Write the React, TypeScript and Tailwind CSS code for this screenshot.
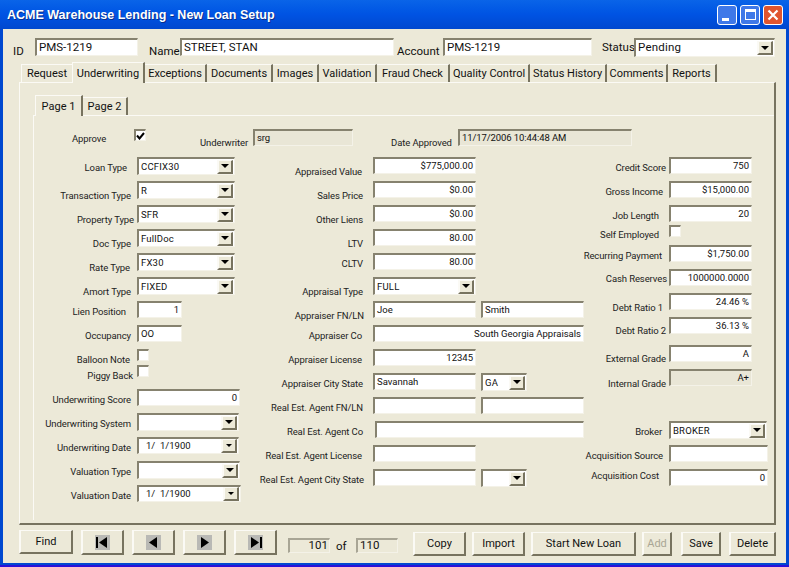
import type { ReactNode } from 'react'

// Sunken / raised edges used all over the form
const sunken = 'border-t-2 border-l-2 border-t-[#86826f] border-l-[#86826f] border-r border-b border-r-[#f4f2e8] border-b-[#f4f2e8]'
const raised = 'border-t border-l-2 border-t-[#fbfaf5] border-l-[#fbfaf5] border-r-2 border-b-2 border-r-[#77735f] border-b-[#77735f]'

function Arrow({ small }: { small?: boolean }) {
  return (
    <svg width={small ? 6 : 8} height={small ? 3 : 4} viewBox="0 0 8 4">
      <path d="M0 0h8L4 4z" fill="#000" />
    </svg>
  )
}

function Text({ value, right, disabled, className }: { value?: string; right?: boolean; disabled?: boolean; className: string }) {
  return (
    <div
      className={`${sunken} ${className} ${disabled ? 'bg-[#e9e6d6]' : 'bg-white'} ${right ? 'justify-end pr-[2px]' : 'pl-[2px]'} flex shrink-0 items-center overflow-hidden whitespace-pre text-[9.5px] leading-none text-[#111]`}
    >
      {value}
    </div>
  )
}

function Combo({ value, small, className }: { value?: string; small?: boolean; className: string }) {
  return (
    <div className={`${sunken} ${className} flex shrink-0 items-center justify-between bg-white text-[9.5px] leading-none text-[#111]`}>
      <span className={small ? 'whitespace-pre pl-[7px]' : 'pl-[2px] tracking-[0.2px]'}>{value}</span>
      <span className={`${raised} mr-px flex h-[14px] w-[16px] items-center justify-center bg-[#ece9d8]`}>
        <Arrow small={small} />
      </span>
    </div>
  )
}

function Check({ checked }: { checked?: boolean }) {
  return (
    <div className={`${sunken} flex h-[12px] w-[12px] shrink-0 items-center justify-center bg-white`}>
      {checked && (
        <svg width="9" height="8" viewBox="0 0 9 8">
          <path d="M1 3.5l2.5 3L8 1" fill="none" stroke="#000" strokeWidth="2" />
        </svg>
      )}
    </div>
  )
}

// one form line: label pushed against the control, row height sets the pitch
function Row({ label, labelClass, h = 'h-[24px]', children }: { label: string; labelClass: string; h?: string; children: ReactNode }) {
  return (
    <div className={`flex ${h} items-start`}>
      <div className={`${labelClass} flex shrink-0 justify-end whitespace-nowrap pt-px text-[9.5px] leading-none tracking-[-0.1px] text-[#222]`}>{label}</div>
      {children}
    </div>
  )
}

function PushButton({ label, className, disabled }: { label: string; className: string; disabled?: boolean }) {
  return (
    <button className={`${raised} ${className} h-[24px] bg-[#ece9d8] text-[11px] leading-none ${disabled ? 'text-[#a9a695]' : 'text-[#111]'}`}>
      {label}
    </button>
  )
}

function NavButton({ d, bar }: { d: string; bar?: 'left' | 'right' }) {
  return (
    <button className={`${raised} flex h-[25px] w-[43px] items-center justify-center bg-[#ece9d8]`}>
      <svg width="15" height="15" viewBox="0 0 15 15">
        <rect width="15" height="15" fill="#b9b9b5" />
        <path d={d} fill="#000" />
        {bar === 'left' && <rect x="1" y="2" width="2" height="11" fill="#000" />}
        {bar === 'right' && <rect x="12" y="2" width="2" height="11" fill="#000" />}
      </svg>
    </button>
  )
}

const outerTabs: [string, string][] = [
  ['Exceptions', 'w-[62px]'],
  ['Documents', 'w-[66px]'],
  ['Images', 'w-[46px]'],
  ['Validation', 'w-[58px]'],
  ['Fraud Check', 'w-[73px]'],
  ['Quality Control', 'w-[80px]'],
  ['Status History', 'w-[77px]'],
  ['Comments', 'w-[61px]'],
  ['Reports', 'w-[49px]'],
]

export default function App() {
  return (
    <div className="flex h-[567px] w-[789px] flex-col overflow-hidden border-b-2 border-b-[#2a10d8] bg-[#0048d0] font-['Roboto',sans-serif]">
      {/* Title bar */}
      <div className="flex h-[29px] shrink-0 items-center justify-between bg-gradient-to-b from-[#0a64e8] via-[#0053e3] to-[#0048cf] pl-[7px] pr-[6px]">
        <span className="pt-[2px] font-['Liberation_Sans',sans-serif] text-[12.5px] font-bold text-white [text-shadow:1px_1px_#0a2f8c]">ACME Warehouse Lending - New Loan Setup</span>
        <div className="flex gap-[3px]">
          <div className="flex h-[20px] w-[20px] items-end rounded-[3px] border border-white bg-[#3f78e8] pb-[3px] pl-[4px]">
            <div className="h-[3px] w-[7px] bg-white" />
          </div>
          <div className="flex h-[20px] w-[20px] items-center justify-center rounded-[3px] border border-white bg-[#3f78e8]">
            <div className="h-[11px] w-[11px] border border-t-[3px] border-white" />
          </div>
          <div className="flex h-[20px] w-[20px] items-center justify-center rounded-[3px] border border-white bg-[#e0552f]">
            <svg width="12" height="12" viewBox="0 0 12 12">
              <path d="M1.5 1.5l9 9M10.5 1.5l-9 9" stroke="#fff" strokeWidth="2.2" />
            </svg>
          </div>
        </div>
      </div>

      {/* Window body */}
      <div className="mx-[3px] mb-[2px] flex min-h-0 flex-1 flex-col bg-[#ece9d8] pl-[16px] pr-[10px] pt-[9px]">
        {/* Header fields */}
        <div className="flex h-[24px] shrink-0 text-[11.5px] leading-none text-[#111]">
          <span className="-ml-[6px] mt-[8px] w-[22px]">ID</span>
          <Text value="PMS-1219" className="h-[18px] w-[103px] !text-[11.5px]" />
          <span className="ml-[11px] mt-[8px] w-[31px]">Name</span>
          <Text value="STREET, STAN" className="h-[18px] w-[214px] !text-[11.5px]" />
          <span className="ml-[3px] mt-[8px] w-[46px]">Account</span>
          <Text value="PMS-1219" className="h-[18px] w-[149px] !text-[11.5px]" />
          <span className="ml-[10px] mt-[4px] w-[32px]">Status</span>
          <Combo value="Pending" className="h-[19px] w-[141px] !text-[11.5px]" />
        </div>

        {/* Tabs */}
        <div className="flex h-[20px] shrink-0 items-end pl-[2px] text-[11px] leading-none text-[#111]">
          <div className="flex h-[18px] w-[51px] items-center justify-center border-l border-t border-[#fbfaf5]">Request</div>
          <div className="z-10 -mb-px flex h-[21px] w-[73px] items-center justify-center border-l border-t border-r-2 border-l-[#fbfaf5] border-t-[#fbfaf5] border-r-[#77735f] bg-[#ece9d8]">Underwriting</div>
          {outerTabs.map(([name, w]) => (
            <div key={name} className={`${w} flex h-[18px] items-center justify-center border-r-2 border-t border-r-[#77735f] border-t-[#fbfaf5]`}>
              {name}
            </div>
          ))}
        </div>

        {/* Tab page */}
        <div className="flex h-[443px] shrink-0 flex-col border-b-2 border-l border-r-2 border-t border-[#fbfaf5] border-b-[#77735f] border-r-[#77735f] pb-[3px] pl-[13px] pt-[12px]">
          <div className="flex h-[20px] shrink-0 items-end pl-[2px] text-[11px] leading-none text-[#111]">
            <div className="z-10 -mb-px flex h-[21px] w-[48px] items-center justify-center border-l border-t border-r-2 border-l-[#fbfaf5] border-t-[#fbfaf5] border-r-[#77735f] bg-[#ece9d8]">Page 1</div>
            <div className="flex h-[18px] w-[45px] items-center justify-center border-r-2 border-t border-r-[#77735f] border-t-[#fbfaf5]">Page 2</div>
          </div>
          <div className="min-h-0 flex-1 border-l border-t border-[#fbfaf5] pt-[13px]">
            {/* Approve line */}
            <div className="flex h-[28px] items-start whitespace-nowrap text-[9.5px] leading-none tracking-[-0.1px] text-[#222]">
              <span className="ml-[38px] mt-[5px] w-[62px]">Approve</span>
              <Check checked />
              <span className="ml-[54px] mt-[9px] w-[53px]">Underwriter</span>
              <Text value="srg" disabled className="h-[17px] w-[100px]" />
              <span className="ml-[38px] mt-[9px] w-[67px]">Date Approved</span>
              <Text value="11/17/2006 10:44:48 AM" disabled className="h-[17px] w-[174px]" />
            </div>

            <div className="flex">
              {/* Left column */}
              <div className="w-[208px] shrink-0">
                <Row label="Loan Type" labelClass="w-[103px] pr-[10px] mt-[5px]"><Combo value="CCFIX30" className="h-[18px] w-[98px]" /></Row>
                <Row label="Transaction Type" labelClass="w-[103px] pr-[6px] mt-[9px]"><Combo value="R" className="h-[18px] w-[98px]" /></Row>
                <Row label="Property Type" labelClass="w-[103px] pr-[3px] mt-[9px]"><Combo value="SFR" className="h-[18px] w-[98px]" /></Row>
                <Row label="Doc Type" labelClass="w-[103px] pr-[6px] mt-[9px]"><Combo value="FullDoc" className="h-[18px] w-[98px]" /></Row>
                <Row label="Rate Type" labelClass="w-[103px] pr-[7px] mt-[9px]"><Combo value="FX30" className="h-[18px] w-[98px]" /></Row>
                <Row label="Amort Type" labelClass="w-[103px] pr-[6px] mt-[9px]"><Combo value="FIXED" className="h-[18px] w-[98px]" /></Row>
                <Row label="Lien Position" labelClass="w-[103px] pr-[11px] mt-[5px]"><Text value="1" right className="h-[17px] w-[45px]" /></Row>
                <Row label="Occupancy" labelClass="w-[103px] pr-[6px] mt-[5px]"><Text value="OO" className="h-[17px] w-[45px]" /></Row>
                <Row label="Balloon Note" h="h-[16px]" labelClass="w-[103px] pr-[7px] mt-[5px]"><Check /></Row>
                <Row label="Piggy Back" labelClass="w-[103px] pr-[4px] mt-[5px]"><Check /></Row>
                <Row label="Underwriting Score" labelClass="w-[103px] pr-[6px] mt-[5px]"><Text value="0" right className="h-[17px] w-[103px]" /></Row>
                <Row label="Underwriting System" labelClass="w-[103px] pr-[6px] mt-[5px]"><Combo className="h-[18px] w-[102px]" /></Row>
                <Row label="Underwriting Date" labelClass="w-[103px] pr-[6px] mt-[5px]"><Combo small value="1/  1/1900" className="h-[17px] w-[102px]" /></Row>
                <Row label="Valuation Type" labelClass="w-[103px] pr-[6px] mt-[5px]"><Combo className="h-[18px] w-[103px]" /></Row>
                <Row label="Valuation Date" labelClass="w-[103px] pr-[6px] mt-[5px]"><Combo small value="1/  1/1900" className="h-[17px] w-[104px]" /></Row>
              </div>

              {/* Middle column */}
              <div className="w-[342px] shrink-0">
                <Row label="Appraised Value" labelClass="w-[131px] pr-[11px] mt-[9px]"><Text value="$775,000.00" right className="h-[17px] w-[103px]" /></Row>
                <Row label="Sales Price" labelClass="w-[131px] pr-[10px] mt-[9px]"><Text value="$0.00" right className="h-[17px] w-[103px]" /></Row>
                <Row label="Other Liens" labelClass="w-[131px] pr-[10px] mt-[9px]"><Text value="$0.00" right className="h-[17px] w-[103px]" /></Row>
                <Row label="LTV" labelClass="w-[131px] pr-[10px] mt-[9px]"><Text value="80.00" right className="h-[17px] w-[103px]" /></Row>
                <Row label="CLTV" labelClass="w-[131px] pr-[10px] mt-[5px]"><Text value="80.00" right className="h-[17px] w-[103px]" /></Row>
                <Row label="Appraisal Type" labelClass="w-[131px] pr-[10px] mt-[9px]"><Combo value="FULL" className="h-[18px] w-[103px]" /></Row>
                <Row label="Appraiser FN/LN" labelClass="w-[131px] pr-[9px] mt-[9px]">
                  <Text value="Joe" className="h-[17px] w-[103px]" />
                  <Text value="Smith" className="ml-[5px] h-[17px] w-[103px]" />
                </Row>
                <Row label="Appraiser Co" labelClass="w-[131px] pr-[11px] mt-[5px]"><Text value="South Georgia Appraisals" right className="h-[17px] w-[211px]" /></Row>
                <Row label="Appraiser License" labelClass="w-[131px] pr-[11px] mt-[5px]"><Text value="12345" right className="h-[17px] w-[103px]" /></Row>
                <Row label="Appraiser City State" labelClass="w-[131px] pr-[10px] mt-[5px]">
                  <Text value="Savannah" className="h-[17px] w-[103px]" />
                  <Combo value="GA" className="ml-[5px] h-[18px] w-[46px]" />
                </Row>
                <Row label="Real Est. Agent FN/LN" labelClass="w-[131px] pr-[10px] mt-[5px]">
                  <Text className="h-[17px] w-[103px]" />
                  <Text className="ml-[5px] h-[17px] w-[103px]" />
                </Row>
                <Row label="Real Est. Agent Co" labelClass="w-[131px] pr-[10px] mt-[5px]"><Text className="ml-[2px] h-[17px] w-[209px]" /></Row>
                <Row label="Real Est. Agent License" labelClass="w-[131px] pr-[11px] mt-[5px]"><Text className="h-[17px] w-[103px]" /></Row>
                <Row label="Real Est. Agent City State" labelClass="w-[131px] pr-[9px] mt-[5px]">
                  <Text className="h-[17px] w-[103px]" />
                  <Combo className="ml-[5px] h-[18px] w-[46px]" />
                </Row>
              </div>

              {/* Right column */}
              <div className="shrink-0">
                <Row label="Credit Score" labelClass="w-[85px] pr-[3px] mt-[5px]"><Text value="750" right className="h-[17px] w-[83px]" /></Row>
                <Row label="Gross Income" labelClass="w-[85px] pr-[6px] mt-[5px]"><Text value="$15,000.00" right className="h-[17px] w-[83px]" /></Row>
                <Row label="Job Length" h="h-[20px]" labelClass="w-[85px] pr-[10px] mt-[5px]"><Text value="20" right className="h-[17px] w-[83px]" /></Row>
                <Row label="Self Employed" h="h-[20px]" labelClass="w-[85px] pr-[10px] mt-[4px]"><Check /></Row>
                <Row label="Recurring Payment" labelClass="w-[85px] pr-[7px] mt-[5px]"><Text value="$1,750.00" right className="h-[17px] w-[83px]" /></Row>
                <Row label="Cash Reserves" labelClass="w-[85px] pr-[2px] mt-[4px]"><Text value="1000000.0000" right className="h-[17px] w-[83px]" /></Row>
                <Row label="Debt Ratio 1" labelClass="w-[85px] pr-[6px] mt-[9px]"><Text value="24.46 %" right className="h-[17px] w-[83px]" /></Row>
                <Row label="Debt Ratio 2" h="h-[28px]" labelClass="w-[85px] pr-[3px] mt-[8px]"><Text value="36.13 %" right className="h-[17px] w-[83px]" /></Row>
                <Row label="External Grade" labelClass="w-[85px] pr-[3px] mt-[8px]"><Text value="A" right className="h-[17px] w-[83px]" /></Row>
                <Row label="Internal Grade" h="h-[52px]" labelClass="w-[85px] pr-[3px] mt-[9px]"><Text value="A+" right disabled className="h-[17px] w-[83px]" /></Row>
                <Row label="Broker" labelClass="w-[85px] pr-[7px] mt-[5px]"><Combo value="BROKER" className="h-[18px] w-[98px]" /></Row>
                <Row label="Acquisition Source" labelClass="w-[85px] pr-[6px] mt-[5px]"><Text className="h-[17px] w-[99px]" /></Row>
                <Row label="Acquisition Cost" labelClass="w-[85px] pr-[10px] mt-[1px]"><Text value="0" right className="h-[17px] w-[99px]" /></Row>
              </div>
            </div>
          </div>
        </div>

        {/* Bottom toolbar */}
        <div className="flex shrink-0 items-start pt-[5px] text-[#111]">
          <PushButton label="Find" className="w-[54px]" />
          <div className="ml-[8px] flex gap-[8px]">
            <NavButton d="M12 2v11L4 7.5z" bar="left" />
            <NavButton d="M11 2v11L3 7.5z" />
            <NavButton d="M4 2v11l8-5.5z" />
            <NavButton d="M3 2v11l8-5.5z" bar="right" />
          </div>
          <div className="ml-[11px] mt-[8px] flex h-[15px] w-[42px] items-center justify-end border border-t-2 border-l-2 border-[#a8a595] border-r-[#f4f2e8] border-b-[#f4f2e8] pr-px text-[11.5px] leading-none">101</div>
          <span className="ml-[6px] mt-[11px] w-[20px] text-[11.5px] leading-none">of</span>
          <div className="mt-[8px] flex h-[15px] w-[42px] items-center border border-t-2 border-l-2 border-[#a8a595] border-r-[#f4f2e8] border-b-[#f4f2e8] pl-[2px] text-[11.5px] leading-none">110</div>
          <div className="ml-[15px] mt-[2px] flex gap-[6px]">
            <PushButton label="Copy" className="w-[53px]" />
            <PushButton label="Import" className="w-[53px]" />
            <PushButton label="Start New Loan" className="w-[105px]" />
            <PushButton label="Add" disabled className="w-[30px]" />
            <PushButton label="Save" className="ml-[3px] w-[40px]" />
            <PushButton label="Delete" className="ml-[2px] w-[47px]" />
          </div>
        </div>
      </div>
    </div>
  )
}
